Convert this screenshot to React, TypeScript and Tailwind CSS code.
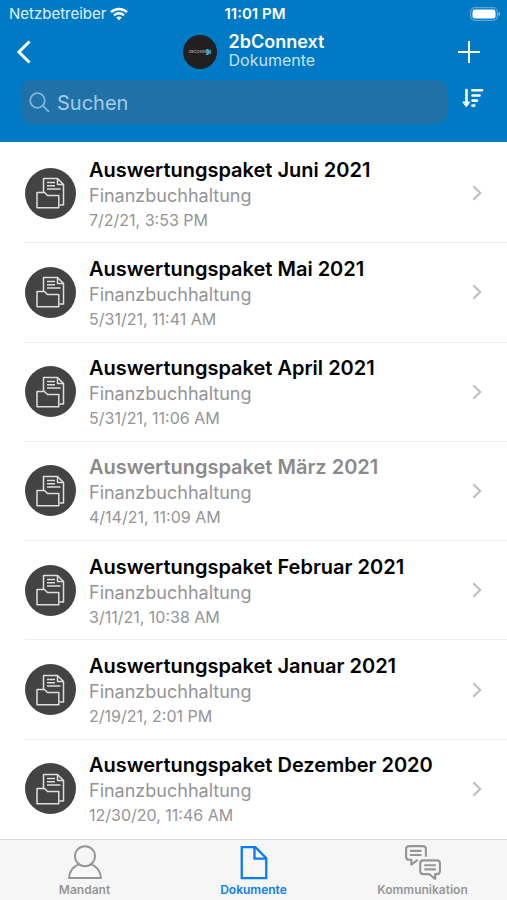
import type { ReactNode } from 'react';

interface DocumentEntry {
  title: string;
  category: string;
  date: string;
  read?: boolean;
}

const documents: DocumentEntry[] = [
  { title: 'Auswertungspaket Juni 2021', category: 'Finanzbuchhaltung', date: '7/2/21, 3:53 PM' },
  { title: 'Auswertungspaket Mai 2021', category: 'Finanzbuchhaltung', date: '5/31/21, 11:41 AM' },
  { title: 'Auswertungspaket April 2021', category: 'Finanzbuchhaltung', date: '5/31/21, 11:06 AM' },
  { title: 'Auswertungspaket März 2021', category: 'Finanzbuchhaltung', date: '4/14/21, 11:09 AM', read: true },
  { title: 'Auswertungspaket Februar 2021', category: 'Finanzbuchhaltung', date: '3/11/21, 10:38 AM' },
  { title: 'Auswertungspaket Januar 2021', category: 'Finanzbuchhaltung', date: '2/19/21, 2:01 PM' },
  { title: 'Auswertungspaket Dezember 2020', category: 'Finanzbuchhaltung', date: '12/30/20, 11:46 AM' },
];

function WifiIcon() {
  return (
    <svg width="18" height="14" viewBox="0 0 18 14" fill="none" stroke="#fff" strokeWidth="2.4">
      <path d="M1 5.2C5.5 0.9 12.5 0.9 17 5.2" />
      <path d="M4 8.3C6.8 5.6 11.2 5.6 14 8.3" />
      <path d="M9 13.4L6.2 10.5C7.8 9.1 10.2 9.1 11.8 10.5Z" fill="#fff" stroke="none" />
    </svg>
  );
}

function BatteryIcon() {
  return (
    <svg width="31" height="14" viewBox="0 0 31 14" fill="none">
      <rect x="0.7" y="0.7" width="26.6" height="12.6" rx="4" stroke="#fff" strokeOpacity="0.35" strokeWidth="1.2" />
      <rect x="2.5" y="2.5" width="23" height="9" rx="2.2" fill="#fff" />
      <path d="M28.5 5V9.2C29.5 8.9 30.2 8.1 30.2 7.1S29.5 5.3 28.5 5Z" fill="#fff" fillOpacity="0.5" />
    </svg>
  );
}

function SortIcon() {
  return (
    <svg width="22" height="20" viewBox="0 0 22 20" fill="none" stroke="currentColor" strokeWidth="2.6" strokeLinecap="round">
      <path d="M4.5 2V15" />
      <path d="M1.2 14H7.8L4.5 18.6Z" fill="currentColor" strokeWidth="1" strokeLinejoin="round" />
      <path d="M10.5 2.3H20" />
      <path d="M10.5 7.5H17.5" />
      <path d="M10.5 12.6H15" />
      <path d="M10.5 17.6H12.2" />
    </svg>
  );
}

function FolderIcon() {
  return (
    <svg width="29" height="32" viewBox="0 0 29 32" fill="none" stroke="#dedede" strokeWidth="1.5" strokeLinejoin="round">
      <path d="M7.5 15V1.5H21.5L27.5 7.5V28H23.5" />
      <path d="M21.5 1.5V7.5H27.5" />
      <path d="M11 5.5H19M11 8.8H19M11 12H24.5" />
      <path d="M1 30.8V15.5H8.5L11.5 18.5H22.8V30.8Z" />
    </svg>
  );
}

function ChevronRight() {
  return (
    <svg width="10" height="16" viewBox="0 0 10 16" fill="none" stroke="#c0c0c3" strokeWidth="2.2">
      <path d="M1.3 1.2L8.2 8L1.3 14.8" />
    </svg>
  );
}

function PersonIcon() {
  return (
    <svg width="36" height="36" viewBox="0 0 36 36" fill="none" stroke="currentColor" strokeWidth="2">
      <circle cx="18" cy="11.5" r="10.3" />
      <path d="M11.5 20C5.8 22.3 2 27.5 1.6 34H34.4C34 27.5 30.2 22.3 24.5 20" />
    </svg>
  );
}

function FileIcon() {
  return (
    <svg width="36" height="36" viewBox="0 0 36 36" fill="none" stroke="currentColor" strokeWidth="2.4">
      <path d="M5.4 2.2H19.5L30.6 13.5V34H5.4Z" />
      <path d="M18.5 2.2V14H30.6" />
    </svg>
  );
}

function ChatIcon() {
  return (
    <svg width="38" height="36" viewBox="0 0 38 36" fill="none" stroke="currentColor" strokeWidth="2.2" strokeLinejoin="round">
      <path d="M13.5 15.2L7 20.2V15.2H5C3 15.2 1.6 14 1.6 12V4.2C1.6 2.2 3 1.1 5 1.1H18.5C20.5 1.1 22 2.2 22 4.2V12" />
      <path d="M5.5 6H17.5M5.5 10.3H17.5" />
      <path d="M19.5 15.8H33C35 15.8 36.4 17 36.4 19V26.7C36.4 28.7 35 30 33 30H31.5V34.8L25.3 30H19.5C17.5 30 16.1 28.7 16.1 26.7V19C16.1 17 17.5 15.8 19.5 15.8Z" />
      <path d="M20.3 20.8H32.2M20.3 25.1H32.2" />
    </svg>
  );
}

function BrandLogo() {
  return (
    <svg width="34" height="34" viewBox="0 0 34 34" role="img" aria-label="2bConnext">
      <circle cx="17" cy="17" r="17" fill="#211f20" />
      <text x="5.5" y="18.4" fontSize="4" fontWeight="600" fill="#9a9a9a">
        2BCONNE
      </text>
      <path d="M22.5 14H25.4L26.5 15.6L28.5 14.5L27.6 17L28.5 19L26.4 18.4L25 20H22.5L24.2 17Z" fill="#38a9cf" />
    </svg>
  );
}

function DocumentRow({ entry }: { entry: DocumentEntry }) {
  return (
    <li className="group flex flex-1 pl-[25px]">
      <a
        href="#"
        className="flex flex-1 items-center border-b border-[#eeeeef] pr-[25px] group-last:border-transparent"
      >
        <span className="flex size-[51px] shrink-0 items-center justify-center rounded-full bg-[#434343]">
          <FolderIcon />
        </span>
        <span className="flex min-w-0 flex-1 flex-col pt-1 pl-[13px]">
          <span
            className={`text-xl leading-[25px] font-semibold ${entry.read ? 'text-[#8a8a8d]' : 'text-black'}`}
          >
            {entry.title}
          </span>
          <span className="text-lg leading-[25px] text-[#949497]">{entry.category}</span>
          <span className="text-base leading-[25px] text-[#949497]">{entry.date}</span>
        </span>
        <ChevronRight />
      </a>
    </li>
  );
}

function Tab({ label, icon, active }: { label: string; icon: ReactNode; active?: boolean }) {
  return (
    <a
      href="#"
      aria-current={active ? 'page' : undefined}
      className={`flex flex-1 flex-col items-center pt-[5px] ${active ? 'text-[#0a7cf5]' : 'text-[#969698]'}`}
    >
      {icon}
      <span className="text-xs leading-[20px] font-semibold">{label}</span>
    </a>
  );
}

export default function App() {
  return (
    <div className="flex min-h-screen flex-col bg-white font-[Inter,sans-serif]">
      <header className="bg-[#007ac5] pb-[18px] text-white">
        {/* Status bar */}
        <div className="grid h-7 grid-cols-3 items-center pr-[6px] pl-[9px] text-[15px]">
          <span className="flex items-center gap-1 text-[#e3f1fa]">
            Netzbetreiber
            <WifiIcon />
          </span>
          <span className="text-center font-semibold">11:01 PM</span>
          <span className="flex justify-end">
            <BatteryIcon />
          </span>
        </div>

        {/* Navigation */}
        <div className="flex h-[52px] items-center justify-between px-4 pb-1">
          <button type="button" aria-label="Zurück" className="flex w-11">
            <svg width="16" height="24" viewBox="0 0 16 24" fill="none" stroke="currentColor" strokeWidth="3">
              <path d="M13.5 1.5L3 12L13.5 22.5" />
            </svg>
          </button>
          <div className="flex items-center gap-3">
            <BrandLogo />
            <div className="pb-[3px]">
              <h1 className="text-lg leading-[18px] font-semibold">2bConnext</h1>
              <p className="text-base leading-[18px] text-[#c5e2f5]">Dokumente</p>
            </div>
          </div>
          <button type="button" aria-label="Hinzufügen" className="flex w-11 justify-end pr-[11px]">
            <svg width="22" height="22" viewBox="0 0 22 22" fill="none" stroke="currentColor" strokeWidth="2">
              <path d="M11 0V22M0 11H22" />
            </svg>
          </button>
        </div>

        {/* Search */}
        <div className="flex pr-[23px] pl-[21px]">
          <label className="flex h-11 flex-1 items-center gap-[7px] rounded-xl bg-[#2071a7] pl-2">
            <svg
              width="21"
              height="21"
              viewBox="0 0 21 21"
              fill="none"
              stroke="#84b5d8"
              strokeWidth="1.8"
              strokeLinecap="round"
            >
              <circle cx="8.5" cy="8.5" r="7.3" />
              <path d="M13.8 13.8L19.6 19.4" />
            </svg>
            <input
              type="search"
              aria-label="Suchen"
              placeholder="Suchen"
              className="min-w-0 flex-1 bg-transparent pt-px text-xl text-white outline-none placeholder:text-[#a5cbe6]"
            />
          </label>
          <button type="button" aria-label="Sortieren" className="flex pt-2 pl-[14px]">
            <SortIcon />
          </button>
        </div>
      </header>

      <main className="flex flex-1 flex-col pt-[2px]">
        <ul className="flex flex-1 flex-col">
          {documents.map((entry) => (
            <DocumentRow key={entry.title} entry={entry} />
          ))}
        </ul>
      </main>

      <nav className="flex h-[61px] border-t border-[#d9dbdc] bg-[#f6f6f6]">
        <Tab label="Mandant" icon={<PersonIcon />} />
        <Tab label="Dokumente" icon={<FileIcon />} active />
        <Tab label="Kommunikation" icon={<ChatIcon />} />
      </nav>
    </div>
  );
}
